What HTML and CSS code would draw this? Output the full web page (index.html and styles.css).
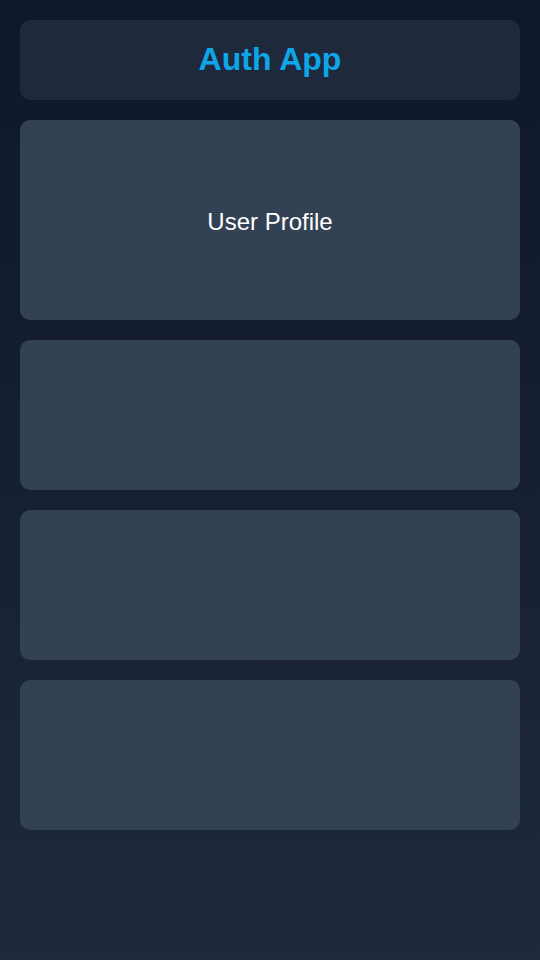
FILE: index.html
```html
<!DOCTYPE html>
<html lang="en">
<head>
<meta charset="utf-8">
<title>Auth App</title>
<link rel="stylesheet" href="styles.css">
</head>
<body>
<div class="app">
  <header class="header"><h1 class="title">Auth App</h1></header>
  <main class="list">
    <section class="card card-lg">User Profile</section>
    <section class="card"></section>
    <section class="card"></section>
    <section class="card"></section>
  </main>
</div>
</body>
</html>
```
FILE: styles.css
```css
html, body {
  margin: 0;
  height: 100%;
}
body {
  background: linear-gradient(180deg, #0f172a 0%, #1e293b 100%);
  font-family: "Liberation Sans", Arial, sans-serif;
  color: #ffffff;
}
.app {
  box-sizing: border-box;
  min-height: 100%;
  padding: 20px;
  display: flex;
  flex-direction: column;
  gap: 20px;
}
.header {
  box-sizing: border-box;
  height: 80px;
  padding-bottom: 2px;
  background: #1e293b;
  border-radius: 10px;
  display: flex;
  align-items: center;
  justify-content: center;
}
.title {
  margin: 0;
  font-size: 32px;
  font-weight: 700;
  color: #0ea5e9;
}
.list {
  display: flex;
  flex-direction: column;
  gap: 20px;
}
.card {
  box-sizing: border-box;
  height: 150px;
  background: #334155;
  border-radius: 10px;
  display: flex;
  align-items: center;
  justify-content: center;
  font-size: 24px;
}
.card-lg {
  height: 200px;
  padding-top: 4px;
}
```
